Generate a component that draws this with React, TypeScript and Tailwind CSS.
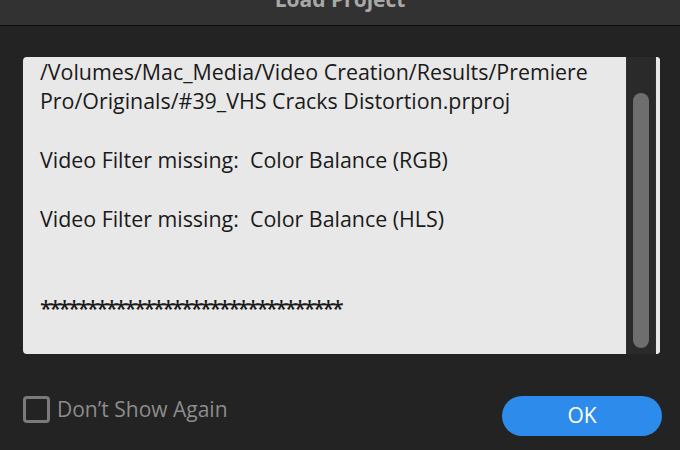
import React from "react";

const lines = [
  "/Volumes/Mac_Media/Video Creation/Results/Premiere",
  "Pro/Originals/#39_VHS Cracks Distortion.prproj",
  "",
  "Video Filter missing:  Color Balance (RGB)",
  "",
  "Video Filter missing:  Color Balance (HLS)",
  "",
  "",
];

export default function App() {
  return (
    <div className="w-[680px] h-[450px] bg-[#232323] overflow-hidden flex flex-col" style={{ fontFamily: "'Open Sans', 'Noto Sans', sans-serif" }}>
      <div className="h-[26px] bg-[#323232] border-b border-[#0e0e0e] relative overflow-hidden shrink-0">
        <div className="absolute left-0 right-0 top-[-14px] text-center text-[21px] font-bold text-[#a8a8a8] leading-[26px]">
          Load Project
        </div>
      </div>
      <div className="flex flex-col pl-[23px] pr-[20px] pt-[31px]">
        <div className="h-[297px] flex rounded-[4px] overflow-hidden bg-[#e8e8e8]">
          <div className="flex-1 pl-[17px] text-[21.4px] leading-[29.4px] text-[#1a1a1a] whitespace-pre overflow-hidden">
            {lines.map((l, i) => (
              <div key={i} className="h-[29.4px]">{l}</div>
            ))}
            <div className="h-[29.4px] tracking-[-2.3px] pt-[1px] font-semibold">********************************</div>
          </div>
          <div className="w-[30px] bg-[#2a2a2a] border-x border-[#303030] flex justify-center pt-[36px] pb-[6px]">
            <div className="w-[16px] h-full rounded-full bg-[#6e6e6e]" />
          </div>
          <div className="w-[4px] bg-[#e8e8e8]" />
        </div>
        <div className="flex items-start justify-between mt-[42px]">
          <div className="flex items-center gap-[7px]">
            <div className="w-[27px] h-[27px] rounded-[4px] border-[3px] border-[#7a7a7a]" />
            <span className="text-[21px] leading-[27px] text-[#8c8c8c]">Don’t Show Again</span>
          </div>
          <button className="w-[160px] h-[40px] rounded-full bg-[#2d8ceb] text-white text-[21px] mr-[-2px]">
            OK
          </button>
        </div>
      </div>
    </div>
  );
}
